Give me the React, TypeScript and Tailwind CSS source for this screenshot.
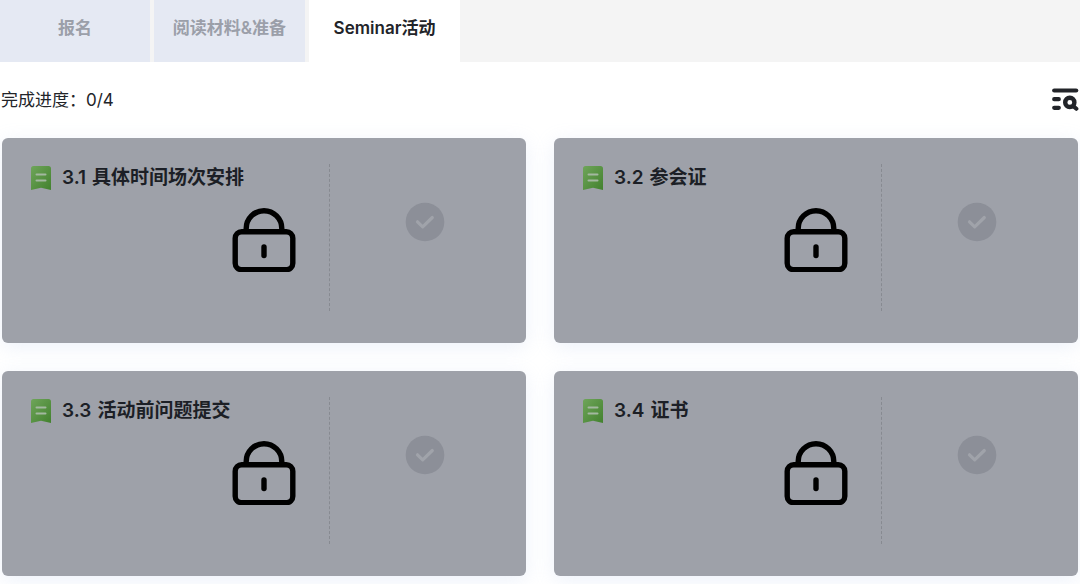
import { useState } from "react";
import clsx from "clsx";

const tabs = ["报名", "阅读材料&准备", "Seminar活动"];

const tasks = [
  { id: "3.1", title: "具体时间场次安排" },
  { id: "3.2", title: "参会证" },
  { id: "3.3", title: "活动前问题提交" },
  { id: "3.4", title: "证书" },
];

function FilterSearchIcon() {
  return (
    <svg
      aria-hidden="true"
      className="h-6 w-7"
      fill="none"
      stroke="#222429"
      strokeLinecap="round"
      viewBox="0 0 28 24"
    >
      <path d="M3.200 2.500h22" strokeWidth="4.200" />
      <path d="M3.200 11.200h4.600M3.200 19.800h4.600" strokeWidth="4.200" />
      <circle cx="18.800" cy="14.400" r="4.600" strokeWidth="4.400" />
      <path d="M22.800 18.600l2.600 2.200" strokeWidth="4" />
    </svg>
  );
}

function BookmarkIcon() {
  return (
    <svg aria-hidden="true" className="h-6 w-5 shrink-0" viewBox="0 0 20 24">
      <defs>
        <linearGradient id="bookmark" x1="0" x2="1" y1="0" y2="1">
          <stop offset="0" stopColor="#6fa55a" />
          <stop offset="1" stopColor="#42812e" />
        </linearGradient>
      </defs>
      <path
        d="M2.500 0h15A2.500 2.500 0 0 1 20 2.500V24L10 21.700 0 24V2.500A2.500 2.500 0 0 1 2.500 0z"
        fill="url(#bookmark)"
      />
      <path
        d="M5.500 8.500h9M5.500 14.500h9"
        stroke="#a3b8a0"
        strokeLinecap="round"
        strokeWidth="2"
      />
    </svg>
  );
}

function LockIcon() {
  return (
    <svg
      aria-hidden="true"
      className="h-16 w-16"
      fill="none"
      stroke="#000"
      strokeLinecap="round"
      strokeWidth="5.400"
      viewBox="0 0 64 64"
    >
      <path d="M14.200 23v-2.500a17.800 17.800 0 0 1 35.600 0V23" strokeLinecap="butt" />
      <rect height="38" rx="6.500" width="57.600" x="3.200" y="23.700" />
      <path d="M32 39v8.500" />
    </svg>
  );
}

function CheckBadge() {
  return (
    <svg aria-hidden="true" className="h-10 w-10" viewBox="0 0 40 40">
      <circle cx="20" cy="20" fill="#8c8f98" r="19.300" />
      <path
        d="M12.500 19.800l5.200 5 9.600-9.300"
        fill="none"
        stroke="#a0a3aa"
        strokeLinecap="round"
        strokeLinejoin="round"
        strokeWidth="3.200"
      />
    </svg>
  );
}

function TaskCard({ id, title }: { id: string; title: string }) {
  return (
    <article className="relative flex h-[205px] rounded-md bg-[#9ea1a9] shadow-[0_4px_20px_rgba(160,185,230,0.2)]">
      <div className="flex-1 pt-[26px] pb-8 pl-[29px]">
        <div className="h-full border-r border-dashed border-[#878a91] pt-px">
          <div className="flex items-center gap-[11px]">
            <BookmarkIcon />
            <h2 className="flex gap-1.5 text-[19px]/[26px] font-semibold text-[#1c1f26]">
              <span>{id}</span>
              <span>{title}</span>
            </h2>
          </div>
        </div>
      </div>
      <div className="flex w-[196px] justify-center pt-16 pr-1.5">
        <CheckBadge />
      </div>
      <div className="absolute inset-0 flex items-center justify-center pb-0.5">
        <LockIcon />
      </div>
    </article>
  );
}

export default function App() {
  const [active, setActive] = useState(2);

  return (
    <div className="bg-white font-['Inter','Noto_Sans_CJK_SC',sans-serif] text-[#222429]">
      <nav className="grid grid-cols-[150px_151px_151px] gap-1 bg-[#f4f4f4]">
        {tabs.map((tab, index) => (
          <button
            className={clsx(
              "h-[62px] pb-1 text-[17px] font-semibold",
              index === active ? "bg-white" : "bg-[#e5e9f3] text-[#9b9fa9]",
            )}
            key={tab}
            onClick={() => setActive(index)}
            type="button"
          >
            {tab}
          </button>
        ))}
      </nav>

      <div className="flex h-[76px] items-center justify-between px-px">
        <p className="pt-0.5 text-[17px]">完成进度：0/4</p>
        <button aria-label="筛选" type="button">
          <FilterSearchIcon />
        </button>
      </div>

      <main className="grid grid-cols-2 gap-7 px-0.5 pb-2">
        {tasks.map((task) => (
          <TaskCard id={task.id} key={task.id} title={task.title} />
        ))}
      </main>
    </div>
  );
}
